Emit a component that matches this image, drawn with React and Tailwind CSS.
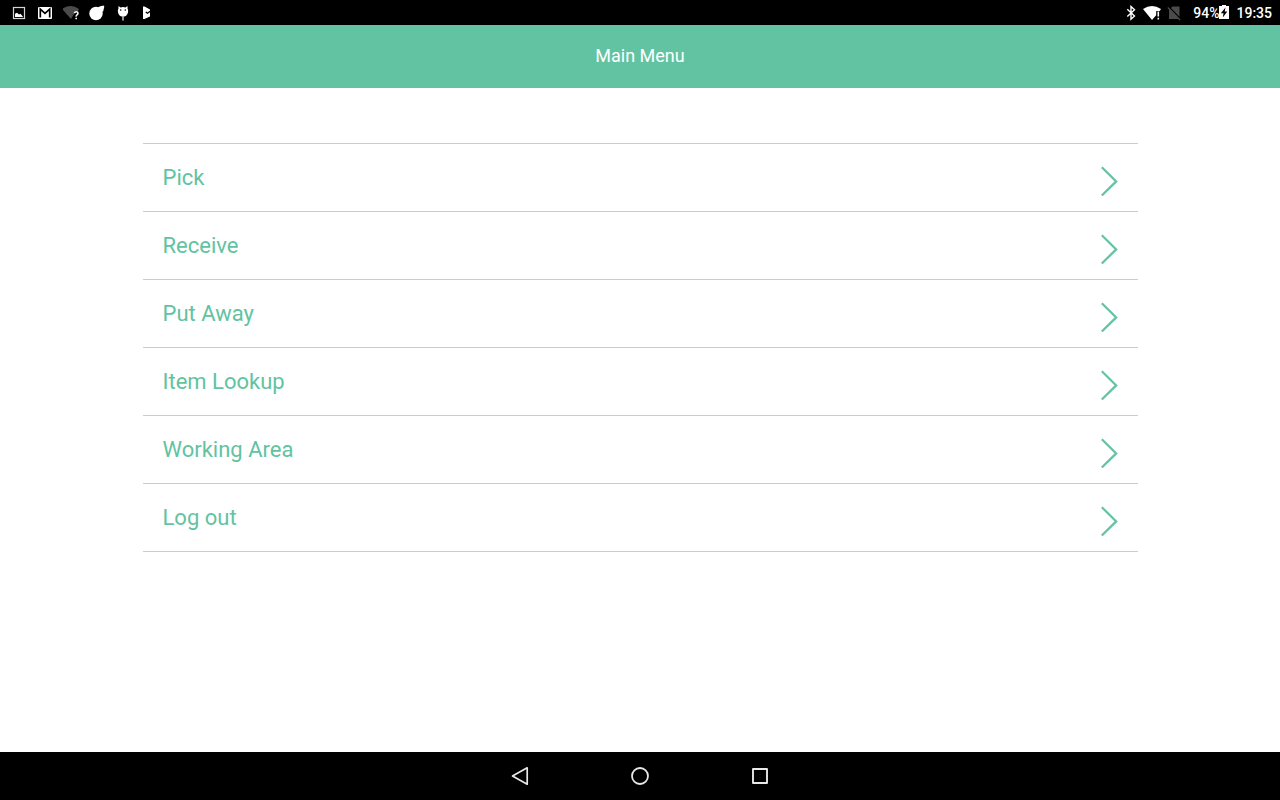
import React from "react";

const items = ["Pick", "Receive", "Put Away", "Item Lookup", "Working Area", "Log out"];

function StatusIcon({ label, children, wide = false }) {
  return (
    <svg
      role="img"
      aria-label={label}
      viewBox={wide ? "0 0 20 16" : "0 0 16 16"}
      className={wide ? "h-4 w-5 shrink-0" : "size-4 shrink-0"}
    >
      {children}
    </svg>
  );
}

function StatusBar() {
  return (
    <div className="flex h-[25px] items-end justify-between bg-black pr-2 pb-1 pl-[11px] text-white">
      <div className="flex gap-[10px]">
        <StatusIcon label="Screenshot saved">
          <rect x="2.500" y="2.500" width="11" height="11" fill="none" stroke="#d4d4d4" strokeWidth="1.200" />
          <path d="M4 12V8.800L6 7.700l2 1.900 1.500-.9 2.700 3.300z" fill="#fff" />
        </StatusIcon>
        <StatusIcon label="New mail">
          <rect x="1" y="2" width="14" height="12" rx="1" fill="#fff" />
          <path d="M3.300 12.500V4.200L8 8.300l4.700-4.100V12.500" fill="none" stroke="#000" strokeWidth="1.700" />
        </StatusIcon>
        <StatusIcon label="Open network available">
          <path d="M-1 4Q8-2 16 4l-1 2H11v3l-3 5z" fill="#4b4b4b" />
          <path d="M11.400 8.300Q11.500 6.700 13.200 6.700T15 8.300Q15 9.200 14 9.900T13.200 11.600M13.200 12.800V14.200" fill="none" stroke="#fff" strokeWidth="1.600" />
        </StatusIcon>
        <StatusIcon label="App notification">
          <circle cx="7" cy="8.500" r="6.700" fill="#fff" />
          <path d="M8.500 3l2-1.500L14.500.5l.8 1-1 4.500-1.500 1.500z" fill="#fff" />
        </StatusIcon>
        <StatusIcon label="USB debugging">
          <path d="M3.500 1l2 1.400Q8 1.600 10.500 2.400L12.500 1l.1 2.800Q13.500 5.500 13 7.500 12 11 9.500 11.500H6.500Q4 11 3 7.500 2.500 5.500 3.400 3.800z" fill="#fff" />
          <path d="M8 11v4.500" stroke="#bdbdbd" strokeWidth="1.600" />
          <circle cx="5.700" cy="5" r=".8" fill="#000" />
          <circle cx="10.300" cy="5" r=".8" fill="#000" />
        </StatusIcon>
        <StatusIcon label="Store update">
          <path d="M2 1.500h1.500l5.500 3v7L3.500 14H2z" fill="#fff" />
          <path d="M4.800 7l1.700 1.300 2.700-2" fill="none" stroke="#000" strokeWidth="1.300" />
        </StatusIcon>
      </div>
      <div className="flex items-end">
        <div className="mr-[10px] flex gap-1">
          <StatusIcon label="Bluetooth on">
            <path d="M4.300 4.200l7.200 6.800L8 14.200V1.500l3.500 3.300-7.200 6.700" fill="none" stroke="#fff" strokeWidth="1.400" />
          </StatusIcon>
          <StatusIcon label="Wi-Fi, no internet" wide>
            <path d="M0 4Q9-2 18 4l-1.300 2H13.200v4.200L9 15z" fill="#fff" />
            <path d="M15.300 6.500v5M15.300 12.800v1.700" stroke="#fff" strokeWidth="1.600" />
          </StatusIcon>
          <StatusIcon label="No SIM card">
            <path d="M5.500 1.500H12.500V14H2V5z" fill="#4b4b4b" />
            <path d="M1.800 1.800L14 14.300" stroke="#000" strokeWidth="1.300" />
            <path d="M.8 2.500L13 15" stroke="#4b4b4b" strokeWidth="1.300" />
          </StatusIcon>
        </div>
        <span className="text-sm leading-4 font-medium">94%</span>
        <svg role="img" aria-label="Charging" viewBox="0 0 10 16" className="mr-[7px] h-4 w-[10px] shrink-0">
          <path d="M0 1h3V0h4v1h3v13H0z" fill="#fff" />
          <path d="M6.500 2.500L1.800 8.200h2.700L3.800 12.500l4.500-5.900H5.700z" fill="#000" />
        </svg>
        <time className="text-sm leading-4 font-medium">19:35</time>
      </div>
    </div>
  );
}

function MenuRow({ label }) {
  return (
    <li className="border-b border-[#cccccc]">
      <button type="button" className="flex h-[67px] w-full items-center justify-between px-5 text-left">
        <span className="text-[22px] leading-7">{label}</span>
        <svg aria-hidden="true" viewBox="0 0 17 30" className="mt-1.5 h-[30px] w-[17px]">
          <path d="M.8 1.200L15.200 15.400.8 29.500" fill="none" stroke="currentColor" strokeWidth="2.200" />
        </svg>
      </button>
    </li>
  );
}

function NavBar() {
  return (
    <nav aria-label="System" className="flex h-12 items-center justify-center gap-24 bg-black text-[#e8e8e8]">
      <button type="button" aria-label="Back" className="size-6">
        <svg viewBox="0 0 24 24" className="size-6" fill="none" stroke="currentColor" strokeWidth="1.700" strokeLinejoin="round">
          <path d="M19.200 3.800v16.400L4.500 12z" />
        </svg>
      </button>
      <button type="button" aria-label="Home" className="size-6">
        <svg viewBox="0 0 24 24" className="size-6" fill="none" stroke="currentColor" strokeWidth="1.800">
          <circle cx="12" cy="12" r="8" />
        </svg>
      </button>
      <button type="button" aria-label="Recent apps" className="size-6">
        <svg viewBox="0 0 24 24" className="size-6" fill="none" stroke="currentColor" strokeWidth="1.900" strokeLinejoin="round">
          <rect x="5" y="5" width="14" height="14" />
        </svg>
      </button>
    </nav>
  );
}

export default function App() {
  return (
    <div className="flex min-h-screen flex-col bg-white font-['Roboto',sans-serif]">
      <StatusBar />
      <header className="flex h-[63px] items-center justify-center bg-[#61c3a1] pb-0.5 text-white">
        <h1 className="text-lg leading-6">Main Menu</h1>
      </header>
      <main className="mx-auto w-full max-w-[995px] grow pt-[55px] text-[#61c3a1]">
        <ul className="border-t border-[#cccccc]">
          {items.map((label) => (
            <MenuRow key={label} label={label} />
          ))}
        </ul>
      </main>
      <NavBar />
    </div>
  );
}
